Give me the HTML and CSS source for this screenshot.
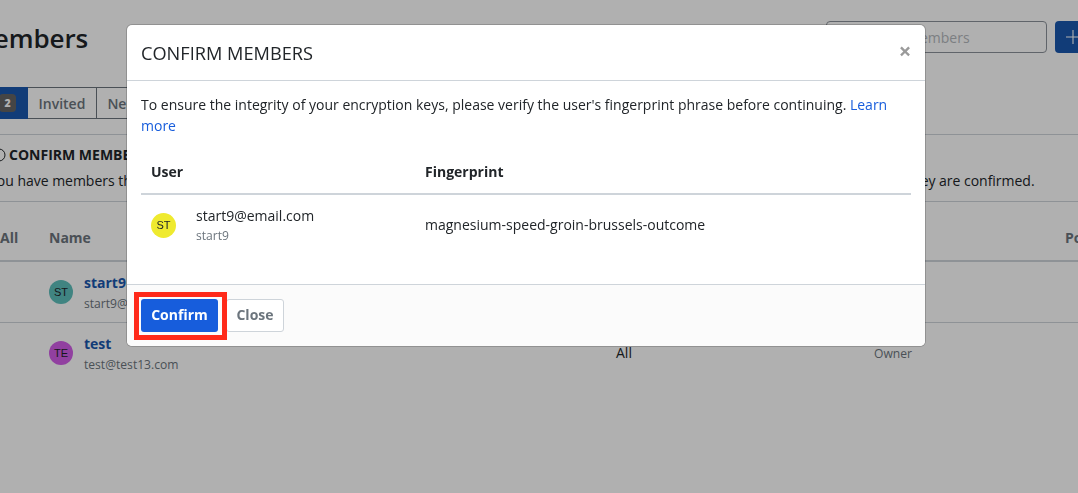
FILE: index.html
```html
<!DOCTYPE html>
<html lang="en">
<head>
<meta charset="utf-8">
<title>Confirm Members</title>
<link rel="stylesheet" href="styles.css">
</head>
<body>
<main class="page">
  <header class="page-head">
    <h1 class="page-title">Members</h1>
    <div class="page-actions">
      <input class="search" type="text" placeholder="Search members">
      <button class="add-btn" type="button" aria-label="Invite">
        <svg viewBox="0 0 16 16" width="16" height="16"><path d="M8 1v14M1 8h14" stroke="#fff" stroke-width="1.1" fill="none"/></svg>
      </button>
    </div>
  </header>
  <nav class="tabs">
    <span class="tab tab-active">All <b class="tab-badge">2</b></span>
    <span class="tab">Invited</span>
    <span class="tab">Needs confirmation</span>
  </nav>
  <section class="callout">
    <h2 class="callout-title"><svg class="callout-icon" viewBox="0 0 14 14" width="14" height="14"><circle cx="7" cy="7" r="6" fill="none" stroke="#212529" stroke-width="1"/><path d="M7 6v4M7 3.8v1" stroke="#212529" stroke-width="1.2"/></svg>CONFIRM MEMBERS</h2>
    <p class="callout-text">You have members that have accepted their invitation but still need to be confirmed. Users will not have access to the organization data until they are confirmed.</p>
  </section>
  <div class="grid grid-head">
    <span class="cell-check">All</span>
    <span>Name</span>
    <span></span>
    <span></span>
    <span>Policies</span>
  </div>
  <div class="grid grid-row">
    <span></span>
    <div class="person">
      <span class="avatar avatar-small avatar-teal">ST</span>
      <div class="person-text"><a class="person-name">start9</a><div class="person-mail">start9@email.com</div></div>
    </div>
    <span class="cell-all">All</span>
    <span class="cell-role">Owner</span>
    <span></span>
  </div>
  <div class="grid grid-row grid-row-last">
    <span></span>
    <div class="person">
      <span class="avatar avatar-small avatar-purple">TE</span>
      <div class="person-text"><a class="person-name">test</a><div class="person-mail">test@test13.com</div></div>
    </div>
    <span class="cell-all">All</span>
    <span class="cell-role">Owner</span>
    <span></span>
  </div>
</main>

<div class="backdrop"></div>

<div class="modal" role="dialog">
  <div class="modal-head">
    <h3 class="modal-title">CONFIRM MEMBERS</h3>
    <button class="modal-x" type="button" aria-label="Close">×</button>
  </div>
  <div class="modal-body">
    <p class="modal-intro">To ensure the integrity of your encryption keys, please verify the user's fingerprint phrase before continuing. <a class="link">Learn more</a></p>
    <div class="fp-head">
      <span>User</span>
      <span>Fingerprint</span>
    </div>
    <div class="fp-row">
      <div class="fp-user">
        <span class="avatar avatar-yellow">ST</span>
        <div class="fp-text">
          <div class="fp-mail">start9@email.com</div>
          <div class="fp-name">start9</div>
        </div>
      </div>
      <div class="fp-phrase">magnesium-speed-groin-brussels-outcome</div>
    </div>
  </div>
  <div class="modal-foot">
    <button class="btn btn-primary" type="button">Confirm</button>
    <button class="btn btn-outline" type="button">Close</button>
    <span class="annotation"></span>
  </div>
</div>
</body>
</html>
```
FILE: styles.css
```css
* { box-sizing: border-box; }

html, body {
  margin: 0;
  height: 100%;
  overflow: hidden;
  background: #fff;
}

body {
  font-family: "Open Sans", sans-serif;
  font-size: 14px;
  line-height: 21px;
  color: #212529;
}

.page {
  margin-left: -30px;
  width: 1180px;
  padding-top: 21px;
}

.page-head {
  display: flex;
  justify-content: space-between;
  align-items: center;
  height: 32px;
}

.page-title {
  margin: 0;
  width: 118px;
  padding-top: 1px;
  text-align: right;
  font-size: 26px;
  line-height: 34px;
  font-weight: 600;
  white-space: nowrap;
  letter-spacing: -0.1px;
}

.page-actions {
  display: flex;
  gap: 8px;
  margin-right: 45px;
}

.search {
  width: 221px;
  height: 32px;
  border: 1px solid #8b929a;
  border-radius: 4px;
  padding: 0 10px 0 32px;
  font: 14px "Open Sans", sans-serif;
  background: #fff;
}

.search::placeholder { color: #b4b8bd; }

.add-btn {
  width: 50px;
  height: 32px;
  border: 0;
  border-radius: 4px;
  background: #1a58ae;
  padding: 0 0 0 10px;
  display: flex;
  align-items: center;
  justify-content: flex-start;
}

.tabs {
  display: flex;
  margin-top: 34px;
  height: 32px;
  font-weight: 600;
  color: #6c757d;
}

.tab {
  display: flex;
  align-items: center;
  gap: 6px;
  padding: 0 10.5px;
  border: 1px solid #6c757d;
  border-left: 0;
  white-space: nowrap;
}

.tab-active {
  width: 58px;
  background: #1a58ae;
  color: #1a58ae;
  border-color: #1a58ae;
  justify-content: flex-end;
  padding: 0 11px 0 0;
}

.tab-badge {
  display: inline-block;
  width: 17px;
  height: 18px;
  border-radius: 4px;
  background: #656565;
  color: #fff;
  font-size: 10.5px;
  line-height: 18px;
  text-align: center;
}

.callout {
  margin-top: 15px;
  border-top: 1px solid #ced4da;
  border-bottom: 1px solid #ced4da;
  height: 68px;
  padding-top: 9px;
}

.callout-title {
  margin: 0 0 0 22px;
  display: flex;
  align-items: center;
  gap: 3px;
  font-size: 14px;
  line-height: 21px;
  font-weight: 700;
  white-space: nowrap;
}

.callout-text {
  margin: 5px 0 0 19px;
  white-space: nowrap;
  letter-spacing: -0.02px;
}

.grid {
  display: grid;
  grid-template-columns: 79px 567px 258px 191px 1fr;
  align-items: center;
}

.grid-head {
  height: 60px;
  border-bottom: 2px solid #ced4da;
  font-weight: 700;
  color: #6c757d;
  padding-top: 13px;
  padding-left: 30px;
  grid-template-columns: 49px 567px 258px 191px 1fr;
}

.grid-row {
  height: 61px;
  border-bottom: 1px solid #ced4da;
}

.grid-row-last { border-bottom-color: transparent; }

.person {
  display: flex;
  align-items: center;
  gap: 11px;
}

.person-text { padding-top: 2px; }

.person-name {
  display: block;
  font-weight: 700;
  color: #1a58ae;
  line-height: 20px;
}

.person-mail {
  margin-top: 1px;
  font-size: 12.1px;
  line-height: 20px;
  color: #6c757d;
}

.cell-all { margin-bottom: 2px; }

.cell-role {
  font-size: 12.1px;
  color: #6c757d;
}

.avatar {
  flex: none;
  width: 25px;
  height: 25px;
  border-radius: 50%;
  display: inline-flex;
  align-items: center;
  justify-content: center;
  font-family: "Liberation Sans", sans-serif;
  font-size: 11px;
  color: #212529;
}

.avatar-small { width: 24px; height: 24px; }
.avatar-teal { background: #5dbfbc; }
.avatar-purple { background: #d25ee8; }
.avatar-yellow { background: #efea2f; }

.backdrop {
  position: fixed;
  inset: 0;
  background: rgba(0, 0, 0, .31);
}

.modal {
  position: fixed;
  left: 127px;
  top: 25px;
  width: 798px;
  height: 321px;
  background: #fff;
  border-radius: 5px;
  overflow: hidden;
  display: flex;
  flex-direction: column;
  box-shadow: 0 0 0 1px rgba(0, 0, 0, .18);
}

.modal-head {
  flex: none;
  height: 56px;
  border-bottom: 1px solid #ced4da;
  display: flex;
  align-items: center;
  justify-content: space-between;
  padding: 0 14px;
}

.modal-title {
  margin: 0;
  font-size: 18.2px;
  line-height: 24px;
  font-weight: 400;
}

.modal-x {
  border: 0;
  background: none;
  padding: 0;
  width: 14px;
  font: 700 22px/21px "Open Sans", sans-serif;
  color: #9a9a9a;
  margin-bottom: 5px;
  margin-right: -1px;
}

.modal-body {
  flex: 1;
  padding: 13px 14px 0;
}

.modal-intro {
  margin: 0;
  height: 42px;
}

.link { color: #175ddc; }

.fp-head {
  display: grid;
  grid-template-columns: 274px 1fr;
  margin-top: 14px;
  height: 45px;
  padding: 0 10px;
  border-bottom: 2px solid #ced4da;
  font-weight: 700;
  align-items: center;
}

.fp-row {
  display: grid;
  grid-template-columns: 274px 1fr;
  padding: 0 10px;
  height: 60px;
  align-items: center;
}

.fp-user {
  display: flex;
  align-items: center;
  gap: 20px;
}

.fp-text { padding-top: 2px; }

.fp-mail { line-height: 20px; }

.fp-name {
  font-size: 12.1px;
  line-height: 20px;
  color: #6c757d;
}

.fp-phrase { padding-bottom: 1px; }

.modal-foot {
  flex: none;
  position: relative;
  height: 62px;
  border-top: 1px solid #ced4da;
  background: #fbfbfb;
  display: flex;
  align-items: center;
  gap: 8px;
  padding: 0 14px;
}

.btn {
  height: 33px;
  border-radius: 3px;
  font: 700 14px "Open Sans", sans-serif;
  padding: 0 0 2px;
}

.btn-primary {
  width: 77px;
  border: 0;
  background: #175ddc;
  color: #fff;
}

.btn-outline {
  width: 58px;
  border: 1px solid #ced4da;
  background: #fff;
  color: #6c757d;
}

.annotation {
  position: absolute;
  left: 7px;
  top: 7px;
  width: 93px;
  height: 48px;
  border: 5px solid #ff2a1a;
}
```
